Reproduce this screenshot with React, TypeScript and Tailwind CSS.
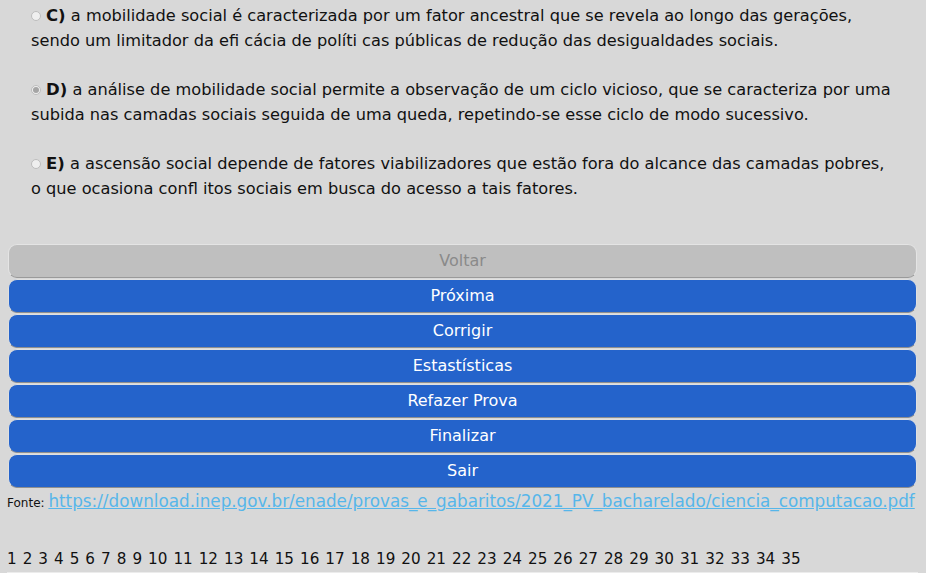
const options = [
  {
    letter: "C)",
    lines: [
      "a mobilidade social é caracterizada por um fator ancestral que se revela ao longo das gerações,",
      "sendo um limitador da efi cácia de políti cas públicas de redução das desigualdades sociais.",
    ],
    checked: false,
  },
  {
    letter: "D)",
    lines: [
      "a análise de mobilidade social permite a observação de um ciclo vicioso, que se caracteriza por uma",
      "subida nas camadas sociais seguida de uma queda, repetindo-se esse ciclo de modo sucessivo.",
    ],
    checked: true,
  },
  {
    letter: "E)",
    lines: [
      "a ascensão social depende de fatores viabilizadores que estão fora do alcance das camadas pobres,",
      "o que ocasiona confl itos sociais em busca do acesso a tais fatores.",
    ],
    checked: false,
  },
];

const buttons = ["Próxima", "Corrigir", "Estastísticas", "Refazer Prova", "Finalizar", "Sair"];

function Radio({ checked }: { checked: boolean }) {
  return (
    <span className="mr-[5px] inline-flex h-[10px] w-[10px] translate-y-[-1px] items-center justify-center rounded-full border border-[#bdbdbd] bg-[#efefef] align-middle">
      {checked && <span className="h-[6px] w-[6px] rounded-full bg-[#a5a5a5]" />}
    </span>
  );
}

export default function App() {
  return (
    <div
      className="h-[573px] w-[926px] overflow-hidden bg-[#d8d8d8] text-[#111]"
      style={{ fontFamily: '"DejaVu Sans", sans-serif' }}
    >
      <div className="flex flex-col gap-[25px] pl-[31px] pt-[4px] text-[16.2px] leading-[24.5px]">
        {options.map((o) => (
          <p key={o.letter} className="whitespace-nowrap">
            <Radio checked={o.checked} />
            <b className="text-[16.5px]">{o.letter}</b> {o.lines[0]}
            <br />
            {o.lines[1]}
          </p>
        ))}
      </div>
      <div className="mt-[43px] flex flex-col gap-px pl-[8px] pr-[9px]">
        <button className="h-[34px] rounded-[9px] border border-[#e4e4e4] border-b-[#9a9a9a] bg-[#bfbfbf] text-[16px] text-[#8a8a8a]">
          Voltar
        </button>
        {buttons.map((b) => (
          <button
            key={b}
            className="h-[34px] rounded-[9px] border border-[#e0e0e0] border-b-[#8f8f8f] bg-[#2463cb] text-[16px] text-white"
          >
            {b}
          </button>
        ))}
      </div>
      <div className="mt-[2px] whitespace-nowrap pl-[7px] leading-[22px]">
        <span className="text-[12px]">Fonte: </span>
        <a className="text-[16.8px] text-[#56b6ea] underline" href="#">
          https://download.inep.gov.br/enade/provas_e_gabaritos/2021_PV_bacharelado/ciencia_computacao.pdf
        </a>
      </div>
      <div className="mt-[35px] flex gap-[6px] pl-[7px] text-[15.2px] leading-[20px]">
        {Array.from({ length: 35 }, (_, i) => (
          <span key={i}>{i + 1}</span>
        ))}
      </div>
      <div className="ml-[7px] mt-[3px] h-[10px] w-[911px] bg-[#ececec]" />
    </div>
  );
}
